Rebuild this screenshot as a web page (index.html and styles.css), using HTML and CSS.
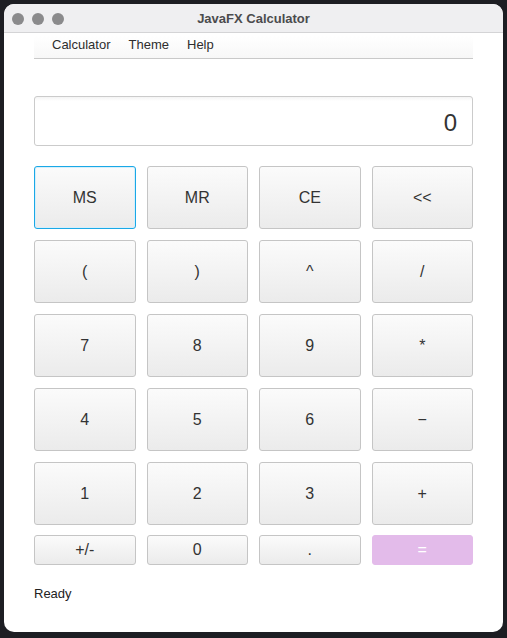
FILE: index.html
```html
<!DOCTYPE html>
<html>
<head>
<meta charset="utf-8">
<link rel="stylesheet" href="styles.css">
</head>
<body>
<div class="desktop">
  <div class="window">
    <div class="titlebar">
      <div class="lights"><span class="light"></span><span class="light"></span><span class="light"></span></div>
      <div class="title">JavaFX Calculator</div>
    </div>
    <div class="content">
      <div class="menubar">
        <span class="menu">Calculator</span>
        <span class="menu">Theme</span>
        <span class="menu">Help</span>
      </div>
      <div class="display">0</div>
      <div class="keys">
        <button class="key focus">MS</button>
        <button class="key">MR</button>
        <button class="key">CE</button>
        <button class="key">&lt;&lt;</button>
        <button class="key">(</button>
        <button class="key">)</button>
        <button class="key">^</button>
        <button class="key">/</button>
        <button class="key">7</button>
        <button class="key">8</button>
        <button class="key">9</button>
        <button class="key">*</button>
        <button class="key">4</button>
        <button class="key">5</button>
        <button class="key">6</button>
        <button class="key">&minus;</button>
        <button class="key">1</button>
        <button class="key">2</button>
        <button class="key">3</button>
        <button class="key">+</button>
      </div>
      <div class="lastrow">
        <button class="key small">+/-</button>
        <button class="key small">0</button>
        <button class="key small">.</button>
        <button class="key small equals">=</button>
      </div>
      <div class="status">Ready</div>
    </div>
  </div>
</div>
</body>
</html>
```

FILE: styles.css
```css
html, body {
  margin: 0;
  padding: 0;
}
body {
  background: #1d1e23;
  font-family: "Liberation Sans", Arial, sans-serif;
}
.desktop {
  width: 507px;
  height: 638px;
  padding: 4px 4px 0 4px;
  box-sizing: border-box;
  background: #1d1e23;
}
.window {
  width: 499px;
  height: 628px;
  border-radius: 10px;
  overflow: hidden;
  background: #ffffff;
  display: flex;
  flex-direction: column;
}
.titlebar {
  height: 28px;
  background: #efeff1;
  border-bottom: 1px solid #d4d4d6;
  display: flex;
  align-items: center;
  position: relative;
  flex-shrink: 0;
}
.lights {
  display: flex;
  gap: 8px;
  padding-left: 8px;
  padding-top: 1px;
}
.light {
  width: 12px;
  height: 12px;
  border-radius: 50%;
  background: #8a8a8c;
}
.title {
  position: absolute;
  left: 0;
  right: 0;
  text-align: center;
  font-weight: bold;
  font-size: 13px;
  color: #4b4b4d;
  top: 7px;
}
.content {
  padding: 3px 30px 0 30px;
  display: flex;
  flex-direction: column;
}
.menubar {
  height: 23px;
  box-sizing: border-box;
  background: linear-gradient(#ffffff, #f7f7f7);
  border-bottom: 1px solid #c9c9c9;
  display: flex;
  align-items: flex-start;
  padding: 1px 0 0 10px;
  font-size: 13px;
  line-height: 16px;
  color: #2e2e2e;
}
.menu {
  padding: 0 8px;
  margin-right: 2px;
}
.display {
  margin-top: 37px;
  height: 48px;
  border: 1px solid #cbcbcb;
  border-radius: 3px;
  background: linear-gradient(#f4f4f4, #ffffff 4px);
  font-size: 24px;
  color: #333;
  text-align: right;
  line-height: 52px;
  padding-right: 15px;
}
.keys {
  margin-top: 20px;
  display: grid;
  grid-template-columns: repeat(4, 1fr);
  grid-auto-rows: 63px;
  gap: 11px;
}
.key {
  font-family: "Liberation Sans", Arial, sans-serif;
  font-size: 16px;
  color: #333;
  border: 1px solid #c5c5c5;
  border-radius: 3px;
  background: linear-gradient(#fbfbfb, #ebebeb);
  padding: 0;
  margin: 0;
}
.key.focus {
  border: 1px solid #1aa8e6;
  box-shadow: inset 0 0 0 1px #d6effb;
}
.lastrow {
  margin-top: 10px;
  display: grid;
  grid-template-columns: repeat(4, 1fr);
  gap: 11px;
  height: 30px;
}
.key.small {
  height: 30px;
}
.key.equals {
  background: #e3bbea;
  border-color: #e3bbea;
  color: #ffffff;
}
.status {
  margin-top: 21px;
  font-size: 13px;
  color: #222;
}
```
